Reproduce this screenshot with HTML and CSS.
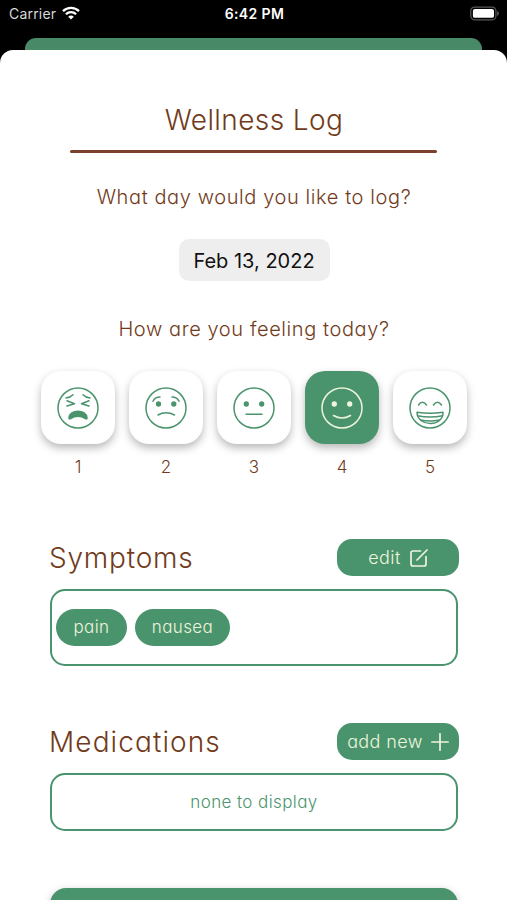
FILE: index.html
```html
<!DOCTYPE html>
<html lang="en">
<head>
    <meta charset="UTF-8">
    <meta name="viewport" content="width=device-width, initial-scale=1.0">
    <title>Wellness Log</title>
    <link rel="stylesheet" href="styles.css">
</head>
<body>

    <div class="status-bar">
        <div class="carrier">
            <span>Carrier</span>
            <svg class="wifi" viewBox="0 0 18 14" fill="none" stroke="#fff" stroke-width="2.3">
                <path d="M1 5.2a11.5 11.5 0 0 1 16 0"/>
                <path d="M3.9 8.3a7.3 7.3 0 0 1 10.2 0"/>
                <path d="M9 13.6L6.2 10.8a4 4 0 0 1 5.6 0z" fill="#fff" stroke="none"/>
            </svg>
        </div>
        <div class="time">6:42 PM</div>
        <div class="status-right">
            <svg class="battery" viewBox="0 0 31 15">
                <rect x="0.8" y="0.8" width="26" height="13.2" rx="4" fill="none" stroke="#58585a" stroke-width="1.3"/>
                <rect x="3" y="2.8" width="21.8" height="9.2" rx="2" fill="#fff"/>
                <path d="M28.2 5v5q1.6-.8 1.6-2.5T28.2 5z" fill="#6c6c6e"/>
            </svg>
        </div>
    </div>

    <div class="back-card"></div>

    <div class="sheet">
        <h1>Wellness Log</h1>
        <div class="rule"></div>

        <p class="question day">What day would you like to log?</p>
        <button class="date">Feb 13, 2022</button>
        <p class="question feeling">How are you feeling today?</p>

        <div class="moods">
            <div class="mood">
                <button class="tile">
                    <svg class="face" viewBox="0 0 42 42">
                        <circle cx="21" cy="21" r="20"/>
                        <path d="M9 11q4.500-.6 7-3.300M33 11q-4.500-.6-7-3.300"/>
                        <path d="M10 13.800l7.500 2.900-7.500 2.300M32 13.800l-7.500 2.900 7.500 2.300"/>
                        <path class="solid" d="M12 31c.3-9 17.700-9 18 0 .1 1-.8 1.200-1.500.7-4.500-3-10.500-3-15 0-.7.5-1.600.3-1.500-.7z"/>
                    </svg>
                </button>
                <span>1</span>
            </div>
            <div class="mood">
                <button class="tile">
                    <svg class="face" viewBox="0 0 42 42">
                        <circle cx="21" cy="21" r="20"/>
                        <path d="M8 14.300q1.700-4.200 7-4.300M34 14.300q-1.700-4.200-7-4.300"/>
                        <circle class="solid" cx="13.500" cy="17" r="1.900"/>
                        <circle class="solid" cx="28.800" cy="17" r="1.900"/>
                        <path d="M13 28q8-4.500 16.500 0"/>
                    </svg>
                </button>
                <span>2</span>
            </div>
            <div class="mood">
                <button class="tile">
                    <svg class="face" viewBox="0 0 42 42">
                        <circle cx="21" cy="21" r="20"/>
                        <circle class="solid" cx="13.300" cy="17" r="1.900"/>
                        <circle class="solid" cx="28.700" cy="17" r="1.900"/>
                        <path d="M13 27.300h16"/>
                    </svg>
                </button>
                <span>3</span>
            </div>
            <div class="mood">
                <button class="tile selected">
                    <svg class="face" viewBox="0 0 42 42">
                        <circle cx="21" cy="21" r="20"/>
                        <circle class="solid" cx="13.300" cy="17" r="1.900"/>
                        <circle class="solid" cx="28.700" cy="17" r="1.900"/>
                        <path d="M12.500 28.500q8.500 5 17 0"/>
                    </svg>
                </button>
                <span>4</span>
            </div>
            <div class="mood">
                <button class="tile">
                    <svg class="face" viewBox="0 0 42 42">
                        <circle cx="21" cy="21" r="20"/>
                        <path d="M9.500 18q3.800-5.500 8 0M24.500 18q3.800-5.500 8 0"/>
                        <path d="M8 25.300q13 2 26 0c.5 15-25.500 15-26 0z"/>
                        <path d="M8.500 28.700q12.500 2.600 25 0M11.500 33q9.500 1.800 19 0"/>
                    </svg>
                </button>
                <span>5</span>
            </div>
        </div>

        <div class="section-head symptoms-head">
            <h2 class="symptoms-title">Symptoms</h2>
            <button class="action edit">
                <span>edit</span>
                <svg class="edit-icon" viewBox="0 0 18 18">
                    <path d="M10.500 2H3Q1 2 1 4v11q0 2 2 2h11q2 0 2-2V7.500M7 11L17 1"/>
                </svg>
            </button>
        </div>
        <div class="box symptoms">
            <span class="chip pain">pain</span>
            <span class="chip nausea">nausea</span>
        </div>

        <div class="section-head meds-head">
            <h2 class="meds-title">Medications</h2>
            <button class="action add">
                <span>add new</span>
                <svg class="add-icon" viewBox="0 0 18 18">
                    <path d="M9 .8v16.400M.8 9h16.400"/>
                </svg>
            </button>
        </div>
        <div class="box meds">none to display</div>

        <button class="save" aria-label="Save"></button>
    </div>

</body>
</html>
```
FILE: styles.css
```css
* {
    box-sizing: border-box;
}
body {
    margin: 0;
    height: 900px;
    overflow: hidden;
    background-color: #000;
    color: #713b1b;
    font-family: Inter, "Open Sans", sans-serif;
    font-feature-settings: "cv11";
}
button {
    border: none;
    padding: 0;
    font: inherit;
    font-feature-settings: inherit;
    cursor: pointer;
}
h1, h2, p {
    margin: 0;
    font-weight: 350;
}
.status-bar {
    display: grid;
    grid-template-columns: 1fr auto 1fr;
    align-items: center;
    height: 38px;
    padding: 0 7px 12px 9px;
    color: #fff;
    font-size: 14px;
    font-feature-settings: normal;
}
.carrier {
    display: flex;
    align-items: center;
    gap: 6px;
    color: #d8d8d8;
    letter-spacing: 0.2px;
}
.wifi {
    width: 18px;
    height: 14px;
}
.time {
    font-weight: 600;
    letter-spacing: 0.4px;
}
.status-right {
    display: flex;
    justify-content: flex-end;
}
.battery {
    width: 30px;
    height: 15px;
}
.back-card {
    height: 12px;
    margin: 0 25px;
    border-radius: 11px 11px 0 0;
    background-color: #488967;
}
.sheet {
    height: 850px;
    padding: 50px 49px 0 50px;
    overflow: hidden;
    border-radius: 13px 13px 0 0;
    background-color: #fff;
}
h1 {
    font-size: 28px;
    line-height: 40px;
    letter-spacing: 0.4px;
    text-align: center;
}
.rule {
    height: 3px;
    margin: 10px 21px 0 20px;
    border-radius: 2px;
    background-color: #7a402b;
}
.question {
    font-size: 20px;
    line-height: 30px;
    letter-spacing: 0.6px;
    text-align: center;
}
.day {
    margin-top: 29px;
}
.date {
    display: block;
    width: 151px;
    height: 42px;
    margin: 27px auto 33px;
    border-radius: 10px;
    background-color: #eeeeef;
    color: #111;
    font-size: 20px;
    line-height: 44px;
    font-feature-settings: normal;
}
.moods {
    display: flex;
    gap: 14px;
    margin: 27px -8px 0 -9px;
}
.mood {
    width: 74px;
    text-align: center;
    font-size: 17px;
    font-weight: 350;
    line-height: 24px;
}
.tile {
    display: flex;
    align-items: center;
    justify-content: center;
    width: 74px;
    height: 73px;
    margin-bottom: 11px;
    border-radius: 20px;
    background-color: #fff;
    color: #4a946d;
    box-shadow: 0 4px 9px rgba(0, 0, 0, 0.28);
}
.tile.selected {
    background-color: #4a946d;
    color: #eef5dc;
}
.face {
    width: 42px;
    height: 42px;
    fill: none;
    stroke: currentColor;
    stroke-width: 1.5;
    stroke-linecap: round;
    stroke-linejoin: round;
}
.face .solid {
    fill: currentColor;
}
.section-head {
    display: flex;
    align-items: center;
    justify-content: space-between;
    height: 37px;
    margin-right: -1px;
}
.symptoms-head {
    margin-top: 60px;
}
.meds-head {
    margin-top: 57px;
}
h2 {
    margin-left: -1px;
    font-size: 28px;
}
.symptoms-title {
    letter-spacing: 0.8px;
}
.meds-title {
    letter-spacing: 1.1px;
}
.action {
    display: flex;
    align-items: center;
    justify-content: center;
    width: 122px;
    height: 37px;
    border-radius: 15px;
    background-color: #4a946d;
    color: #eef5dc;
    font-size: 18px;
    font-weight: 300;
    letter-spacing: 0.4px;
}
.edit {
    gap: 9px;
}
.add {
    gap: 8px;
}
.edit-icon, .add-icon {
    width: 18px;
    height: 18px;
    fill: none;
    stroke: currentColor;
    stroke-width: 1.7;
    stroke-linecap: round;
    stroke-linejoin: round;
}
.box {
    display: flex;
    align-items: center;
    margin-top: 13px;
    border: 2px solid #4a9470;
    border-radius: 15px;
}
.symptoms {
    height: 77px;
    gap: 8px;
    padding-left: 4px;
}
.chip {
    height: 37px;
    border-radius: 19px;
    background-color: #4a946d;
    color: #eef5dc;
    font-size: 17px;
    font-weight: 300;
    letter-spacing: 0.4px;
    line-height: 36px;
    text-align: center;
}
.pain {
    width: 71px;
}
.nausea {
    width: 95px;
}
.meds {
    height: 58px;
    justify-content: center;
    color: #4a946d;
    font-size: 17px;
    font-weight: 300;
    letter-spacing: 0.4px;
}
.save {
    display: block;
    width: 408px;
    height: 60px;
    margin-top: 57px;
    border-radius: 16px;
    background-color: #4a946d;
    box-shadow: 0 3px 9px rgba(0, 0, 0, 0.25);
}
```
